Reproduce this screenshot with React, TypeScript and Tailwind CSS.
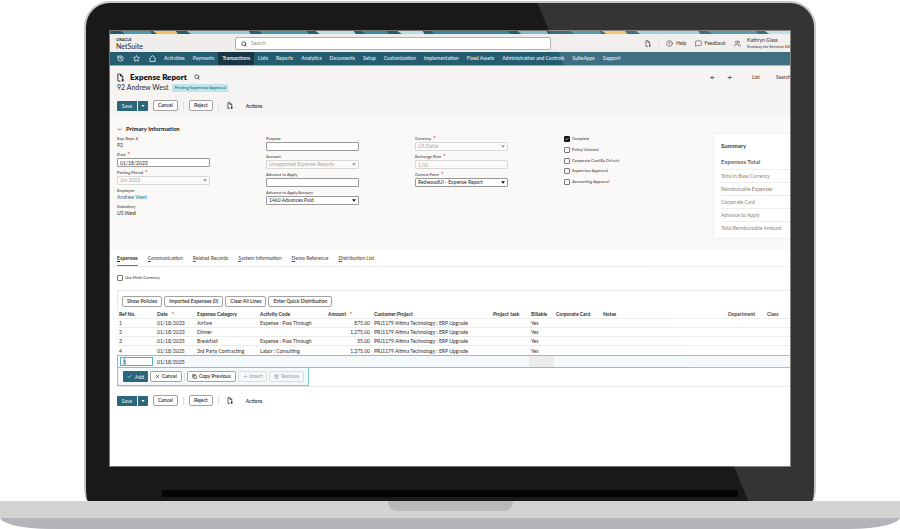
import type { ReactNode } from "react";
import {
  ArrowLeft,
  ArrowRight,
  Check,
  ChevronDown,
  CircleHelp,
  Copy,
  History,
  MessageSquare,
  Plus,
  Search,
  Star,
  Trash2,
  Users,
  X,
} from "lucide-react";

const bands: [number, number, string][] = [
  [13, 27, "#4a9aae"],
  [45, 21, "#f2c25b"],
  [79, 60, "#93cbd6"],
  [151, 46, "#4a98ab"],
  [208, 36, "#b4dde4"],
  [254, 23, "#3c8ba0"],
  [290, 23, "#b4dde4"],
  [323, 76, "#3688a0"],
  [410, 27, "#7fbcc9"],
  [463, 27, "#3f91a6"],
  [495, 21, "#f2c25b"],
  [529, 60, "#93cbd6"],
  [601, 46, "#3f91a6"],
  [658, 23, "#b4dde4"],
];

const menu = [
  "Activities",
  "Payments",
  "Transactions",
  "Lists",
  "Reports",
  "Analytics",
  "Documents",
  "Setup",
  "Customization",
  "Implementation",
  "Fixed Assets",
  "Administration and Controls",
  "SuiteApps",
  "Support",
];

const tabs = [
  "Expenses",
  "Communication",
  "Related Records",
  "System Information",
  "Demo Reference",
  "Distribution List",
];

const rows = [
  ["1", "01/18/2023", "Airfare", "Expense : Pass Through", "875.00"],
  ["2", "01/18/2023", "Dinner", "", "1,275.00"],
  ["3", "01/18/2025", "Breakfast", "Expense : Pass Through", "55.00"],
  ["4", "01/18/2025", "3rd Party Contracting", "Labor : Consulting", "1,375.00"],
];

const headings = [
  "Ref No.",
  "Date",
  "Expense Category",
  "Activity Code",
  "Amount",
  "Customer:Project",
  "Project task",
  "Billable",
  "Corporate Card",
  "Notes",
  "Department",
  "Class",
];

function DocIcon({ className }: { className: string }) {
  return (
    <svg viewBox="0 0 16 20" className={className} fill="none" stroke="currentColor" strokeWidth="2" aria-hidden="true">
      <path d="M8 18H2V2h6l5 5v4M8 2v5h5" />
      <path d="M11 12h4v7h-4z" fill="currentColor" stroke="none" />
    </svg>
  );
}

function Caret({ className }: { className: string }) {
  return (
    <svg viewBox="0 0 8 5" className={className} fill="currentColor" aria-hidden="true">
      <path d="M0 0h8L4 5z" />
    </svg>
  );
}

function Required() {
  return <span className="ml-[2px] text-[6px] font-bold leading-[4px] text-[#d63b25]">*</span>;
}

function Divider() {
  return <span className="h-[8px] w-px shrink-0 bg-[#dedddb]" />;
}

function OutlineButton({ children, disabled = false }: { children: ReactNode; disabled?: boolean }) {
  return (
    <button
      disabled={disabled}
      className="flex h-[11px] items-center gap-[2px] whitespace-nowrap rounded-[2px] border border-[#a5a3a1] bg-white px-[4px] font-semibold leading-[9px] text-[#2f2c2a] disabled:border-[#dddddd] disabled:bg-transparent disabled:text-[#a8a8a8]"
    >
      {children}
    </button>
  );
}

function Actions() {
  return (
    <div className="flex items-center">
      <button className="h-[10px] w-[20px] rounded-l-[1px] bg-[#2c667b] font-semibold leading-[10px] text-[#d5e6ea]">Save</button>
      <button aria-label="More save options" className="ml-px flex h-[10px] w-[10px] items-center justify-center rounded-r-[1px] bg-[#2c667b] text-white">
        <Caret className="h-[2px] w-[4px]" />
      </button>
      <div className="ml-[5px] flex items-center gap-[5px]">
        <OutlineButton>Cancel</OutlineButton>
        <Divider />
        <OutlineButton>Reject</OutlineButton>
        <Divider />
      </div>
      <DocIcon className="ml-[8px] h-[7px] w-[6px] text-[#222]" />
      <button className="ml-[13px] font-semibold text-[#2f2c2a]">Actions</button>
    </div>
  );
}

function Field({
  label,
  id,
  value,
  kind = "text",
  required = false,
  disabled = false,
}: {
  label: string;
  id: string;
  value: string;
  kind?: "text" | "select" | "static" | "link";
  required?: boolean;
  disabled?: boolean;
}) {
  const labelRow = (
    <>
      {label}
      {required && <Required />}
    </>
  );
  const box =
    "block h-[9px] w-full appearance-none rounded-[1px] border border-[#9b9997] bg-white px-[2px] py-0 leading-[7px] text-[#2b2826] disabled:border-[#d9d8d6] disabled:bg-[#fbfaf9] disabled:text-[#a9a8a6] disabled:opacity-100";
  return (
    <div className="w-[93px]">
      {kind === "static" || kind === "link" ? (
        <>
          <p className="text-[4px] font-bold leading-[6px] text-[#6b6764]">{labelRow}</p>
          {kind === "link" ? (
            <a href="#employee" className="block leading-[7px] text-[#277592]">{value}</a>
          ) : (
            <p className="leading-[7px] text-[#2b2826]">{value}</p>
          )}
        </>
      ) : (
        <>
          <label htmlFor={id} className="block text-[4px] font-bold leading-[6px] text-[#6b6764]">{labelRow}</label>
          {kind === "select" ? (
            <div className="relative">
              <select id={id} defaultValue={value} disabled={disabled} className={box}>
                <option>{value}</option>
              </select>
              <Caret
                className={
                  disabled
                    ? "pointer-events-none absolute right-[3px] top-[3px] h-[3px] w-[4px] text-[#9a9896]"
                    : "pointer-events-none absolute right-[3px] top-[3px] h-[3px] w-[4px] text-[#111]"
                }
              />
            </div>
          ) : (
            <input id={id} type="text" defaultValue={value} disabled={disabled} className={box} />
          )}
        </>
      )}
    </div>
  );
}

function Tick({ label, checked = false }: { label: string; checked?: boolean }) {
  return (
    <label className="flex h-[6px] items-center gap-[2px] text-[4px] font-bold text-[#6b6764]">
      <span className="relative flex size-[6px]">
        <input
          type="checkbox"
          defaultChecked={checked}
          className="peer size-[6px] appearance-none rounded-[1px] border border-[#7a7876] bg-white checked:border-[#161513] checked:bg-[#161513]"
        />
        <Check strokeWidth={4} className="pointer-events-none absolute inset-0 hidden size-[6px] p-px text-white peer-checked:block" />
      </span>
      {label}
    </label>
  );
}

function TopBar() {
  return (
    <header className="flex h-[18px] items-center bg-[#f0eeed]">
      <div className="w-[125px] shrink-0 pl-[6px] text-[#2b2826]">
        <p className="text-[4px] font-bold leading-[5px]">ORACLE</p>
        <p className="text-[7px] leading-[8px]">NetSuite</p>
      </div>
      <div className="relative w-[316px]">
        <Search strokeWidth={3} className="absolute left-[6px] top-[4px] size-[6px] text-[#333]" />
        <input
          type="search"
          aria-label="Search"
          placeholder="Search"
          className="block h-[13px] w-full appearance-none rounded-[2px] border border-[#b3b1af] bg-white pl-[15px] leading-[11px] placeholder:text-[#8b8987]"
        />
      </div>
      <div className="ml-auto flex w-[145px] shrink-0 items-center font-semibold text-[#35312e]">
        <DocIcon className="h-[7px] w-[6px]" />
        <span className="ml-[7px] h-[8px] w-px bg-[#dedddb]" />
        <button className="ml-[7px] flex w-[29px] items-center gap-[3px]">
          <CircleHelp strokeWidth={2} className="size-[7px] shrink-0" />
          Help
        </button>
        <button className="flex w-[40px] items-center gap-[3px]">
          <MessageSquare strokeWidth={2} className="size-[7px] shrink-0" />
          Feedback
        </button>
        <Users strokeWidth={2} className="size-[7px] shrink-0" />
        <div className="ml-[6px] whitespace-nowrap">
          <p className="leading-[7px]">Kathryn Glass</p>
          <p className="text-[4px] leading-[6px]">Stairway for Services US</p>
        </div>
      </div>
    </header>
  );
}

function MenuBar() {
  return (
    <nav className="flex h-[14px] items-center border-b border-[#8fadb8] bg-[#265c70] font-semibold text-[#dce8ec]">
      <div className="flex w-[50px] shrink-0 items-center gap-[9px] pl-[7px]">
        <History strokeWidth={3} className="size-[7px]" />
        <Star strokeWidth={3} className="size-[7px]" />
        <svg viewBox="0 0 24 24" className="size-[7px]" fill="none" stroke="currentColor" strokeWidth="3" aria-hidden="true">
          <path d="M3 22V10l9-8 9 8v12z" />
        </svg>
      </div>
      {menu.map((item) => (
        <a
          key={item}
          href="#menu"
          className={
            item === "Transactions"
              ? "whitespace-nowrap bg-[#183643] px-[4px] leading-[13px] text-white"
              : "whitespace-nowrap px-[4px] leading-[13px]"
          }
        >
          {item}
        </a>
      ))}
    </nav>
  );
}

function TitleArea() {
  return (
    <section className="h-[51px] bg-[#f5f4f2] pl-[7px] pt-[5px]">
      <div className="flex h-[12px] items-center">
        <DocIcon className="h-[9px] w-[7px] text-[#222]" />
        <h1 className="ml-[6px] text-[8px] font-extrabold leading-[12px] text-[#111]">Expense Report</h1>
        <Search strokeWidth={3} className="ml-[7px] size-[6px] text-[#444]" />
        <div className="ml-auto flex w-[80px] shrink-0 items-center font-semibold text-[#35312e]">
          <button aria-label="Previous"><ArrowLeft strokeWidth={4} className="size-[5px]" /></button>
          <button aria-label="Next" className="ml-[12px]"><ArrowRight strokeWidth={4} className="size-[5px]" /></button>
          <span className="ml-[9px] h-[11px] w-px bg-[#dedddb]" />
          <a href="#list" className="ml-[11px] w-[24px] shrink-0">List</a>
          <a href="#search" className="shrink-0">Search</a>
        </div>
      </div>
      <div className="flex h-[9px] items-center gap-[4px]">
        <p className="text-[7px] leading-[9px] text-[#2b2826]">92 Andrew West</p>
        <span className="bg-[#c3e4ea] px-[2px] text-[4px] font-bold leading-[8px] text-[#1f85a0]">Pending Supervisor Approval</span>
      </div>
      <div className="pt-[8px]">
        <Actions />
      </div>
    </section>
  );
}

function SummaryCard() {
  return (
    <aside className="mt-[8px] h-[106px] w-[77px] shrink-0 overflow-hidden border border-r-0 border-[#efeeed] bg-white pl-[7px] pt-[7px] text-[#77736f]">
      <h2 className="text-[6px] font-bold leading-[10px] text-[#222]">Summary</h2>
      <h3 className="mt-[6px] border-b border-[#ececeb] pb-[2px] text-[6px] font-bold leading-[10px] text-[#55524f]">Expenses Total</h3>
      <ul className="leading-[12px]">
        <li className="whitespace-nowrap border-b border-[#ececeb]">Total in Base Currency</li>
        <li className="whitespace-nowrap border-b border-[#ececeb]">Reimbursable Expenses</li>
        <li className="whitespace-nowrap border-b border-[#ececeb]">Corporate Card</li>
        <li className="whitespace-nowrap border-b border-[#ececeb]">Advance to Apply</li>
        <li className="whitespace-nowrap">Total Reimbursable Amount</li>
      </ul>
    </aside>
  );
}

function PrimaryInformation() {
  return (
    <section className="flex h-[133px] justify-between bg-[#faf9f8] pl-[7px] pt-[8px]">
      <div>
        <h2 className="flex items-center gap-[4px] text-[6px] font-bold leading-[8px] text-[#161513]">
          <ChevronDown strokeWidth={3} className="size-[5px]" />
          Primary Information
        </h2>
        <div className="mt-[3px] grid grid-cols-[149px_149px_149px_100px]">
          <div className="flex flex-col gap-[3px]">
            <Field id="number" label="Exp. Rept. #" value="92" kind="static" />
            <Field id="date" label="Date" value="01/18/2023" required />
            <Field id="period" label="Posting Period" value="Jan 2023" kind="select" required disabled />
            <Field id="employee" label="Employee" value="Andrew West" kind="link" />
            <Field id="subsidiary" label="Subsidiary" value="US West" kind="static" />
          </div>
          <div className="flex flex-col gap-[3px]">
            <Field id="purpose" label="Purpose" value="" />
            <Field id="account" label="Account" value="Unapproved Expense Reports" kind="select" disabled />
            <Field id="advance" label="Advance to Apply" value="" />
            <Field id="advance-account" label="Advance to Apply Account" value="1460 Advances Paid" kind="select" />
          </div>
          <div className="flex flex-col gap-[3px]">
            <Field id="currency" label="Currency" value="US Dollar" kind="select" required disabled />
            <Field id="rate" label="Exchange Rate" value="1.00" required disabled />
            <Field id="form" label="Custom Form" value="RedwoodUI - Expense Report" kind="select" required />
          </div>
          <div className="flex h-[49px] flex-col justify-between">
            <Tick label="Complete" checked />
            <Tick label="Policy Violated" />
            <Tick label="Corporate Card By Default" />
            <Tick label="Supervisor Approval" />
            <Tick label="Accounting Approval" />
          </div>
        </div>
      </div>
      <SummaryCard />
    </section>
  );
}

function ExpenseLines() {
  return (
    <section className="ml-[7px] mt-[9px] border-y border-[#e8e7e6]">
      <div className="flex gap-[2px] border-l border-[#e8e7e6] pb-[3px] pl-[4px] pt-[5px]">
        <OutlineButton>Show Policies</OutlineButton>
        <OutlineButton>Imported Expenses (0)</OutlineButton>
        <OutlineButton>Clear All Lines</OutlineButton>
        <OutlineButton>Enter Quick Distribution</OutlineButton>
      </div>
      <table className="w-full table-fixed border-separate border-spacing-0 whitespace-nowrap text-left leading-[8px] text-[#2f2c2a]">
        <colgroup>
          <col className="w-[38px]" />
          <col className="w-[40px]" />
          <col className="w-[63px]" />
          <col className="w-[64px]" />
          <col className="w-[50px]" />
          <col className="w-[119px]" />
          <col className="w-[38px]" />
          <col className="w-[25px]" />
          <col className="w-[47px]" />
          <col className="w-[125px]" />
          <col className="w-[39px]" />
          <col />
        </colgroup>
        <thead>
          <tr>
            {headings.map((h) => (
              <th
                key={h}
                className={
                  h === "Amount"
                    ? "border-b border-[#ececeb] px-[2px] pl-[6px] font-bold"
                    : "border-b border-[#ececeb] px-[2px] font-bold"
                }
              >
                {h}
                {(h === "Date" || h === "Amount") && <span className="ml-[4px] leading-[4px] text-[#d63b25]">*</span>}
              </th>
            ))}
          </tr>
        </thead>
        <tbody>
          {rows.map((r, i) => {
            const cell = i === rows.length - 1 ? "px-[2px]" : "border-b border-[#ececeb] px-[2px]";
            return (
              <tr key={r[0]} className="h-[9px]">
                <td className={cell}>{r[0]}</td>
                <td className={cell}>{r[1]}</td>
                <td className={cell}>{r[2]}</td>
                <td className={cell}>{r[3]}</td>
                <td className={`${cell} text-right`}>{r[4]}</td>
                <td className={cell}>PRJ1179 Altima Technology : ERP Upgrade</td>
                <td className={cell} />
                <td className={cell}>Yes</td>
                <td className={cell} />
                <td className={cell} />
                <td className={cell} />
                <td className={cell} />
              </tr>
            );
          })}
          <tr className="h-[13px] bg-[#f4f9fb]">
            <td className="border-y border-l border-[#82c4d1] px-[2px]">
              <input
                aria-label="Ref No."
                defaultValue="5"
                className="block h-[9px] w-[33px] border border-[#5fabc4] bg-[linear-gradient(90deg,white_2px,#b5d2f0_2px,#b5d2f0_5px,white_5px)] px-[2px] leading-[7px] text-[#245f9c]"
              />
            </td>
            <td className="border-y border-[#82c4d1] px-[2px]">01/18/2025</td>
            <td colSpan={5} className="border-y border-[#82c4d1]" />
            <td className="border-y border-[#82c4d1] bg-[#ebeced]" />
            <td colSpan={4} className="border-y border-[#82c4d1]" />
          </tr>
        </tbody>
      </table>
      <div className="flex h-[18px] w-[192px] items-center gap-[2px] border border-t-0 border-[#82c4d1] bg-[#f4f9fb] pl-[5px]">
        <button className="flex h-[11px] items-center gap-[3px] rounded-[1px] bg-[#2c667b] px-[4px] font-semibold text-[#dce8ec]">
          <Check strokeWidth={3} className="size-[5px]" />
          Add
        </button>
        <OutlineButton>
          <X strokeWidth={3} className="size-[5px]" />
          Cancel
        </OutlineButton>
        <Divider />
        <OutlineButton>
          <Copy strokeWidth={3} className="size-[5px]" />
          Copy Previous
        </OutlineButton>
        <OutlineButton disabled>
          <Plus strokeWidth={3} className="size-[5px]" />
          Insert
        </OutlineButton>
        <OutlineButton disabled>
          <Trash2 strokeWidth={3} className="size-[5px]" />
          Remove
        </OutlineButton>
      </div>
    </section>
  );
}

export default function App() {
  return (
    <div className="flex min-h-screen flex-col bg-white pt-px font-['Lato','Noto_Sans',sans-serif] text-[5px] leading-[8px]">
      <div className="relative mx-[84px] flex flex-1 flex-col overflow-hidden rounded-t-[26px] rounded-b-[4px_14px] border-2 border-b-0 border-[#c5c7c9] bg-[#191919] px-[23px] pt-[27px]">
        <main className="flex-1 overflow-hidden border border-[#76726f] bg-white">
          <svg viewBox="0 0 681 3" preserveAspectRatio="none" className="block h-[3px] w-full bg-[#265c70]" aria-hidden="true">
            {bands.map(([x, w, fill]) => (
              <path key={x} d={`M${x - 2} 0h${w + 2}l2 3h${-w}z`} fill={fill} />
            ))}
          </svg>
          <TopBar />
          <MenuBar />
          <TitleArea />
          <PrimaryInformation />
          <div role="tablist" className="flex h-[17px] gap-[10px] border-b border-[#eeedec] pl-[7px] font-semibold text-[#5c5855]">
            {tabs.map((t, i) => (
              <button
                key={t}
                role="tab"
                aria-selected={i === 0}
                className={i === 0 ? "border-b border-[#2f8fae] text-[#161513]" : "border-b border-transparent"}
              >
                <span className="underline">{t[0]}</span>
                {t.slice(1)}
              </button>
            ))}
          </div>
          <div className="pl-[7px] pt-[8px]">
            <Tick label="Use Multi Currency" />
          </div>
          <ExpenseLines />
          <div className="pl-[7px] pt-[8px]">
            <Actions />
          </div>
        </main>
        <div className="flex h-[34px] flex-col justify-end px-[53px] pb-[4px]">
          <div className="h-[7px] bg-[#040404]" />
        </div>
        <div className="pointer-events-none absolute inset-0 bg-white/12 [clip-path:polygon(62%_0,100%_0,100%_100%,91%_100%)]" />
      </div>
      <div className="flex h-[28px] flex-col items-center overflow-hidden rounded-b-[50px_12px] bg-linear-to-b from-[#d3d3d3] from-60% to-[#b4b4ba] to-60%">
        <div className="h-[10px] w-[125px] rounded-b-[9px] bg-[#b9b9bb]" />
      </div>
    </div>
  );
}
